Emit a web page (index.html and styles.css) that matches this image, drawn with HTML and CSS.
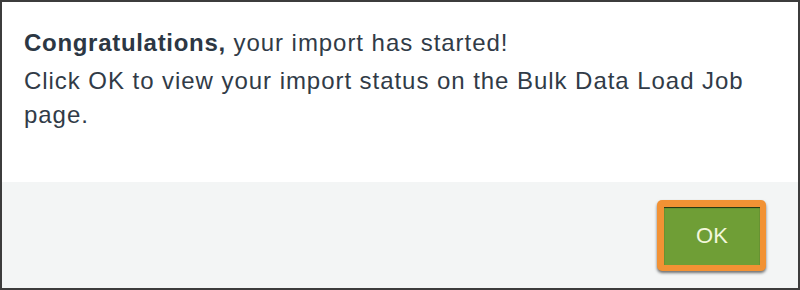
FILE: index.html
```html
<!DOCTYPE html>
<html>
<head>
<meta charset="utf-8">
<link rel="stylesheet" href="styles.css">
</head>
<body>
<div class="dialog">
  <div class="dialog-body">
    <p class="headline"><strong>Congratulations,</strong> your import has started!</p>
    <p class="message">Click OK to view your import status on the Bulk Data Load Job page.</p>
  </div>
  <div class="dialog-footer">
    <div class="highlight">
      <button class="ok-button">OK</button>
    </div>
  </div>
</div>
</body>
</html>
```

FILE: styles.css
```css
html, body {
  margin: 0;
  padding: 0;
  background: #ffffff;
}

.dialog {
  box-sizing: border-box;
  width: 800px;
  height: 290px;
  border: 2px solid #3c3c3c;
  display: flex;
  flex-direction: column;
  font-family: "Liberation Sans", Arial, sans-serif;
}

.dialog-body {
  height: 180px;
  box-sizing: border-box;
  padding: 24px 30px 0 22px;
  background: #ffffff;
}

.headline,
.message {
  margin: 0;
  font-size: 24px;
  line-height: 34px;
  letter-spacing: 0.95px;
  color: #313b47;
}

.message {
  margin-top: 4px;
}

.headline strong {
  font-weight: bold;
  letter-spacing: 0.7px;
  color: #2c3744;
}

.dialog-footer {
  flex: 1;
  background: #f3f5f5;
  display: flex;
  justify-content: flex-end;
  align-items: flex-start;
  padding: 18px 32px 0 0;
}

.highlight {
  background: #f29234;
  border-radius: 5px;
  padding: 7px 6px 6px 7px;
  box-shadow: 0 2px 3px rgba(0, 0, 0, 0.55);
}

.ok-button {
  display: block;
  width: 96px;
  height: 58px;
  border: none;
  margin: 0;
  padding: 0;
  background: #6f9e36;
  box-shadow: inset 0 1px 1px rgba(0, 0, 0, 0.7);
  color: #f3f7dc;
  font-family: "Liberation Sans", Arial, sans-serif;
  font-size: 22px;
  line-height: 58px;
  text-align: center;
}
```
